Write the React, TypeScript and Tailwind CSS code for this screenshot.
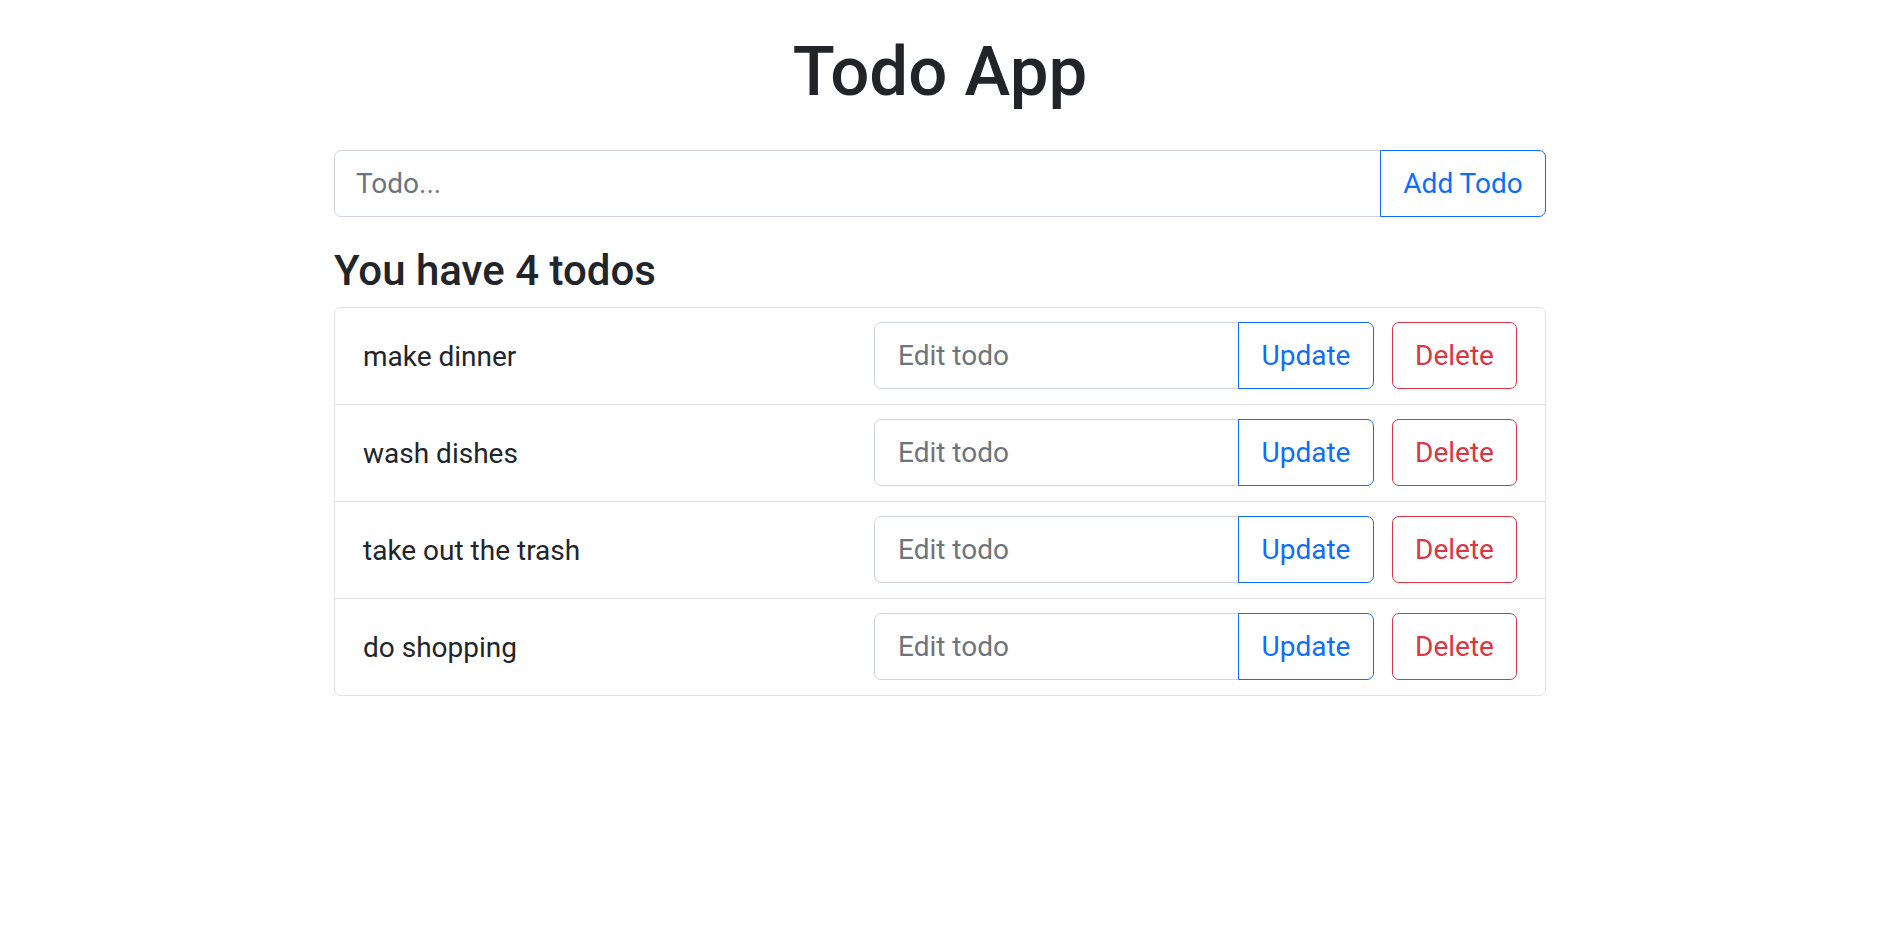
import React from "react";

const todos = ["make dinner", "wash dishes", "take out the trash", "do shopping"];

export default function App() {
  return (
    <div
      className="min-h-screen bg-white text-[#212529]"
      style={{ fontFamily: "Roboto, 'Liberation Sans', sans-serif" }}
    >
      <div className="mx-auto w-[1212px]">
        <h1 className="pt-[31px] text-center text-[69px] font-medium leading-[82px] text-[#212529]">
          Todo App
        </h1>
        <div className="mt-[37px] flex h-[67px]">
          <input
            placeholder="Todo..."
            className="h-full flex-1 rounded-l-[7px] border border-[#ced4da] px-[21px] text-[28px] text-[#212529] outline-none placeholder:text-[#6c757d]"
          />
          <button className="-ml-px h-full w-[166px] rounded-r-[7px] border border-[#0d6efd] text-[28px] text-[#0d6efd]">
            Add Todo
          </button>
        </div>
        <h4 className="mt-[29px] mb-[11px] text-[42px] font-medium leading-[50px] text-[#212529]">
          You have 4 todos
        </h4>
        <ul className="rounded-[7px] border border-[#dee2e6]">
          {todos.map((t, i) => (
            <li
              key={t}
              className={
                "flex items-center justify-between px-[28px] pt-[14px] pb-[15px] " +
                (i > 0 ? "border-t border-[#dee2e6]" : "")
              }
            >
              <span className="pt-[2px] text-[28px] leading-[42px] text-[#212529]">{t}</span>
              <div className="flex h-[67px] items-stretch">
                <input
                  placeholder="Edit todo"
                  className="h-full w-[365px] rounded-l-[7px] border border-[#ced4da] px-[23px] text-[28px] text-[#212529] outline-none placeholder:text-[#6c757d]"
                />
                <button className="-ml-px h-full w-[136px] rounded-r-[7px] border border-[#0d6efd] text-[28px] text-[#0d6efd]">
                  Update
                </button>
                <button className="ml-[18px] h-full w-[125px] rounded-[7px] border border-[#dc3545] text-[28px] text-[#dc3545]">
                  Delete
                </button>
              </div>
            </li>
          ))}
        </ul>
      </div>
    </div>
  );
}
